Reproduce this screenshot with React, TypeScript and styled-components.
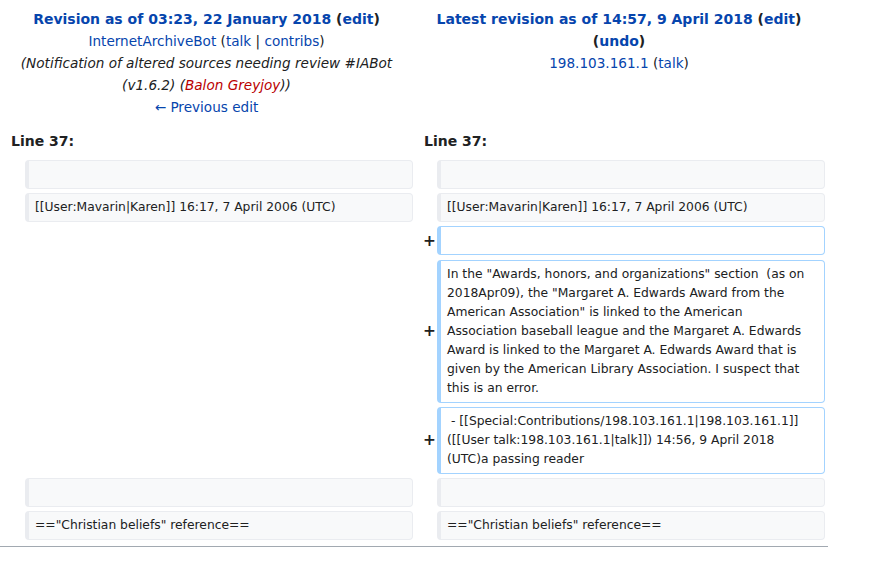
import React from "react";
import styled, { createGlobalStyle } from "styled-components";

const GlobalStyle = createGlobalStyle`
  html, body { margin: 0; padding: 0; background: #ffffff; }
  body {
    font-family: "DejaVu Sans", sans-serif;
    color: #202122;
  }
`;

const Page = styled.div`
  width: 874px;
  height: 563px;
  overflow: hidden;
  display: flex;
  flex-direction: column;
`;

const HeaderRow = styled.div`
  display: flex;
  padding-top: 8px;
`;

const HeaderCell = styled.div<{ $w: number }>`
  width: ${(p) => p.$w}px;
  text-align: center;
  font-size: 13.6px;
  line-height: 22px;
  padding: 0 4px;
  box-sizing: border-box;
`;

const Title = styled.div`
  font-weight: bold;
  font-size: 14px;
`;

const Link = styled.a<{ $red?: boolean }>`
  color: ${(p) => (p.$red ? "#ba0000" : "#0645ad")};
  text-decoration: none;
`;

const Comment = styled.div`
  font-style: italic;
`;

const LineRow = styled.div`
  display: flex;
  margin-top: 12px;
`;

const LineNo = styled.div<{ $w: number }>`
  width: ${(p) => p.$w}px;
  padding-left: 11px;
  box-sizing: border-box;
  font-size: 14px;
  line-height: 22px;
  font-weight: bold;
`;

const DiffBody = styled.div`
  display: flex;
  flex-direction: column;
  gap: 4.2px;
  margin-top: 8px;
`;

const DiffRow = styled.div`
  display: grid;
  grid-template-columns: 25px 388px 24px 388px;
  align-items: stretch;
`;

const Marker = styled.div`
  display: flex;
  align-items: center;
  justify-content: flex-end;
  padding-right: 1px;
  font-size: 15.4px;
  font-weight: bold;
  line-height: 1.2;
  color: #202122;
`;

const Cell = styled.div<{ $kind: "context" | "added" }>`
  box-sizing: border-box;
  border-style: solid;
  border-width: 1px 1px 1px 4px;
  border-radius: 4px;
  border-color: ${(p) => (p.$kind === "added" ? "#a3d3ff" : "#eaecf0")};
  background: ${(p) => (p.$kind === "added" ? "#ffffff" : "#f8f9fa")};
  padding: 4px 11px 4px 6px;
  font-size: 12.32px;
  line-height: 19px;
  white-space: pre-wrap;
  word-wrap: break-word;
  min-height: 29px;
  color: #202122;
`;

const Empty = styled.div``;

const Divider = styled.div`
  width: 828px;
  height: 0;
  border-top: 1px solid #a2a9b1;
  margin-top: 6px;
`;

type Side = { kind: "context" | "added"; text: string } | null;

const rows: { left: Side; right: Side }[] = [
  { left: { kind: "context", text: "" }, right: { kind: "context", text: "" } },
  {
    left: { kind: "context", text: "[[User:Mavarin|Karen]] 16:17, 7 April 2006 (UTC)" },
    right: { kind: "context", text: "[[User:Mavarin|Karen]] 16:17, 7 April 2006 (UTC)" },
  },
  { left: null, right: { kind: "added", text: "" } },
  {
    left: null,
    right: {
      kind: "added",
      text:
        'In the "Awards, honors, and organizations" section  (as on 2018Apr09), the "Margaret A. Edwards Award from the American Association" is linked to the American Association baseball league and the Margaret A. Edwards Award is linked to the Margaret A. Edwards Award that is given by the American Library Association. I suspect that this is an error.',
    },
  },
  {
    left: null,
    right: {
      kind: "added",
      text:
        " - [[Special:Contributions/198.103.161.1|198.103.161.1]] ([[User talk:198.103.161.1|talk]]) 14:56, 9 April 2018 (UTC)a passing reader",
    },
  },
  { left: { kind: "context", text: "" }, right: { kind: "context", text: "" } },
  {
    left: { kind: "context", text: '=="Christian beliefs" reference==' },
    right: { kind: "context", text: '=="Christian beliefs" reference==' },
  },
];

function SideCells({ side }: { side: Side }) {
  if (!side) {
    return (
      <>
        <Empty />
        <Empty />
      </>
    );
  }
  return (
    <>
      <Marker>{side.kind === "added" ? "+" : ""}</Marker>
      <Cell $kind={side.kind}>{side.text}</Cell>
    </>
  );
}

export default function App() {
  return (
    <>
      <GlobalStyle />
      <Page>
        <HeaderRow>
          <HeaderCell $w={413}>
            <Title>
              <Link>Revision as of 03:23, 22 January 2018</Link> (<Link>edit</Link>)
            </Title>
            <div>
              <Link>InternetArchiveBot</Link> (<Link>talk</Link> | <Link>contribs</Link>)
            </div>
            <Comment>
              (Notification of altered sources needing review #IABot (v1.6.2) (
              <Link $red>Balon Greyjoy</Link>))
            </Comment>
            <div>
              <Link>← Previous edit</Link>
            </div>
          </HeaderCell>
          <HeaderCell $w={412}>
            <Title>
              <Link>Latest revision as of 14:57, 9 April 2018</Link> (<Link>edit</Link>) (
              <Link>undo</Link>)
            </Title>
            <div>
              <Link>198.103.161.1</Link> (<Link>talk</Link>)
            </div>
          </HeaderCell>
        </HeaderRow>
        <LineRow>
          <LineNo $w={413}>Line 37:</LineNo>
          <LineNo $w={412}>Line 37:</LineNo>
        </LineRow>
        <DiffBody>
          {rows.map((r, i) => (
            <DiffRow key={i}>
              <SideCells side={r.left} />
              <SideCells side={r.right} />
            </DiffRow>
          ))}
        </DiffBody>
        <Divider />
      </Page>
    </>
  );
}
